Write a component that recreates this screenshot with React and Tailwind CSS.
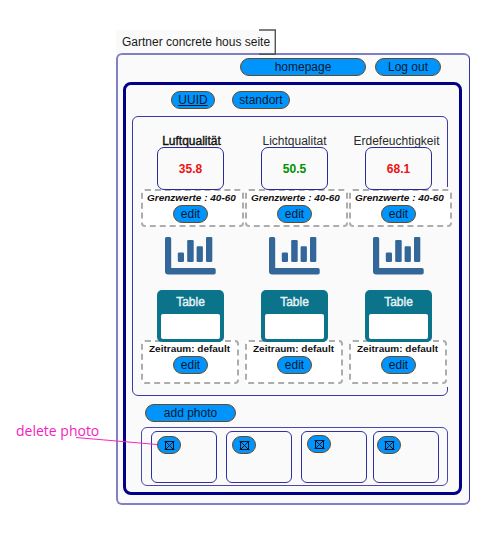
import React from "react";

const columns = [
  { label: "Luftqualität", labelClass: "ml-[2px] text-[#111] [-webkit-text-stroke:0.4px_#111]", value: "35.8", tone: "text-[#ee1111]" },
  { label: "Lichtqualitat", labelClass: "ml-[1px] text-[#2a2a2a]", value: "50.5", tone: "text-[#009100]" },
  { label: "Erdefeuchtigkeit", labelClass: "ml-[-1px] text-[#2a2a2a]", value: "68.1", tone: "text-[#ee1111]" },
];

const photos = [
  { card: "ml-[9px]", pill: "ml-[5px] mt-[4px]" },
  { card: "ml-[9px]", pill: "ml-[5px] mt-[4px]" },
  { card: "ml-[9px]", pill: "ml-[5px] mt-[3px]" },
  { card: "ml-[6px]", pill: "ml-[3px] mt-[4px]" },
];

function Pill({ className, children }) {
  return (
    <button
      className={`flex h-[18px] shrink-0 items-center justify-center rounded-full border border-[#6b4a20] bg-[#0094ff] text-[12px] leading-[14px] text-[#061a2c] ${className}`}
    >
      {children}
    </button>
  );
}

function ChartIcon() {
  return (
    <svg className="mt-[10px] ml-[24px] block h-[38px] w-[51px] shrink-0" viewBox="0 0 51 38" fill="#336699">
      <path d="M1.6 0h3q1.6 0 1.6 1.6V31h42.9q1.6 0 1.6 1.6v3.2q0 1.6-1.6 1.6H3.3Q0 37.400 0 34.200V1.600Q0 0 1.600 0z" />
      <rect x="12.800" y="15.500" width="6.200" height="9.500" rx="1.200" />
      <rect x="22.200" y="3" width="6.500" height="22" rx="1.200" />
      <rect x="31.600" y="9.200" width="6.300" height="15.800" rx="1.200" />
      <rect x="41" y="0" width="6.300" height="25" rx="1.200" />
    </svg>
  );
}

function Column({ label, labelClass, value, tone }) {
  return (
    <div className="flex w-[104px] shrink-0 flex-col items-start">
      <div className={`flex h-[14px] w-[97px] justify-center text-[12px] leading-[14px] whitespace-nowrap ${labelClass}`}>
        {label}
      </div>
      <div
        className={`relative z-10 mt-[-1px] ml-[16px] flex h-[43px] w-[67px] items-center justify-center rounded-[7px] border border-[#2a2a9c] bg-[#fafafa] text-[12px] font-bold ${tone}`}
      >
        {value}
      </div>
      <div className="mt-[-1px] flex h-[38px] w-[103px] flex-col items-start rounded-[4px] border-2 border-dashed border-[#adadad] bg-white">
        <div className="ml-[4px] origin-left scale-x-[1.11] text-[9px] leading-[14px] font-bold whitespace-nowrap text-[#111] italic">
          Grenzwerte : 40-60
        </div>
        <Pill className="ml-[30px] w-[35px]">edit</Pill>
      </div>
      <ChartIcon />
      <div className="relative z-10 mt-[15px] ml-[16px] flex h-[52px] w-[67px] flex-col rounded-[5px] bg-[#0b738a] px-[4px] pb-[3px]">
        <div className="flex h-[24px] items-center justify-center text-[12px] leading-[14px] text-[#e4f2f4] [-webkit-text-stroke:0.4px_#e4f2f4]">
          Table
        </div>
        <div className="h-[25px] rounded-[2px] bg-white" />
      </div>
      <div className="mt-[-2px] flex h-[44px] w-[98px] flex-col items-start rounded-[4px] border-2 border-dashed border-[#adadad] bg-white">
        <div className="ml-[6px] origin-left scale-x-[1.11] text-[9px] leading-[14px] font-bold whitespace-nowrap text-[#111]">
          Zeitraum: default
        </div>
        <Pill className="ml-[30px] w-[35px]">edit</Pill>
      </div>
    </div>
  );
}

export default function App() {
  return (
    <div className="relative h-[534px] w-[500px] overflow-hidden bg-white pt-[30px] pl-[116px] font-['Liberation_Sans',Arial,sans-serif]">
      <header className="relative h-[23px] w-[160px] bg-[#fafafa] pl-[6px] text-[12px] leading-[24px] whitespace-nowrap text-[#1a1a1a]">
        Gartner concrete hous seite
        <svg className="absolute top-[-1px] left-[142px] h-[27px] w-[20px]" viewBox="0 0 20 27" fill="none" stroke="#555" strokeWidth="1.400">
          <path d="M1 1H17.300V25.300H1" />
        </svg>
      </header>

      <main className="flex h-[452px] w-[354px] flex-col rounded-[6px] border-2 border-[#8080c6] border-r-[#3535a0] bg-[#fafafa] [border-right-width:1px]">
        <nav className="mt-[3px] flex pl-[122px]">
          <Pill className="w-[126px]">homepage</Pill>
          <Pill className="ml-[9px] w-[66px]">Log out</Pill>
        </nav>

        <section className="mt-[6px] ml-[5px] flex h-[413px] w-[339px] flex-col rounded-[8px] border-[3px] border-[#00008b]">
          <div className="mt-[6px] flex pl-[45px]">
            <Pill className="w-[44px]"><span className="underline">UUID</span></Pill>
            <Pill className="ml-[17px] w-[58px]">standort</Pill>
          </div>

          <div className="mt-[7px] ml-[6px] h-[280px] w-[316px] rounded-[6px] border border-[#3a3aa5]">
            <div className="flex h-full pt-[17px] pl-[8px]">
              {columns.map((column) => (
                <Column key={column.label} {...column} />
              ))}
            </div>
          </div>

          <div className="mt-[8px] pl-[19px]">
            <Pill className="w-[91px]">add photo</Pill>
          </div>

          <div className="mt-[5px] ml-[15px] flex h-[59px] w-[307px] rounded-[6px] border border-[#4a4aac] pt-[3px]">
            {photos.map(({ card, pill }, index) => (
              <div key={index} className={`${card} h-[52px] w-[66px] shrink-0 rounded-[6px] border border-[#3030a0]`}>
                <Pill className={`w-[24px] ${pill}`}>
                  <svg className="h-[9px] w-[11px]" viewBox="0 0 11 9" fill="none" stroke="#0a1722" strokeWidth="1">
                    <path d="M1.500 .5H9.500V8.500H1.500zM1.500 .5L9.500 8.500M9.500 .5L1.500 8.500M.5 .5H10.500M.5 8.500H10.500" />
                  </svg>
                </Pill>
              </div>
            ))}
          </div>
        </section>
      </main>

      <div className="absolute top-[187px] left-[447px] h-[2px] w-px bg-[#fafafa]" />
      <div className="absolute top-[227px] left-[447px] h-[160px] w-px bg-[#fafafa]" />
      <div className="absolute top-[421px] left-[16px] font-['Open_Sans','Noto_Sans',sans-serif] text-[14px] leading-[20px] whitespace-nowrap text-[#f51dbd]">
        delete photo
      </div>
      <svg className="absolute top-[436px] left-[75px] h-[10px] w-[84px]" viewBox="0 0 84 10" fill="none">
        <path d="M1 1.500L82 8.500" stroke="#ff24bf" strokeWidth="1" />
      </svg>
    </div>
  );
}
